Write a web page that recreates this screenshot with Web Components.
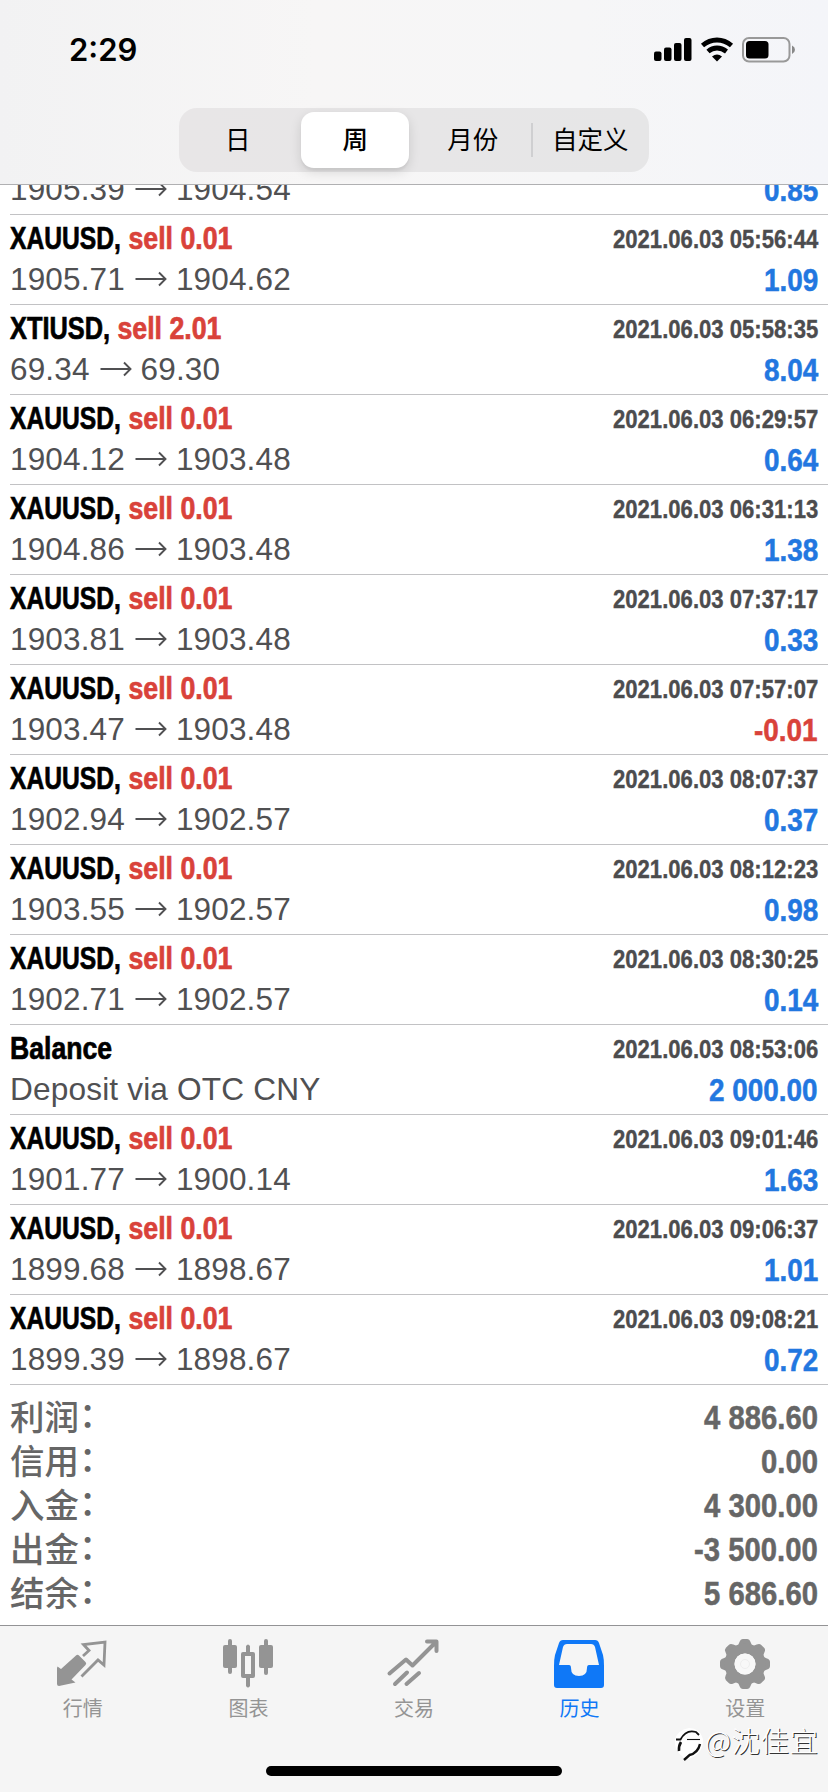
<!DOCTYPE html>
<html lang="zh-CN">
<head>
<meta charset="utf-8">
<title>历史</title>
<style>
html,body{margin:0;padding:0;background:#fff}
body{width:828px;height:1792px;overflow:hidden;font-family:"Liberation Sans","Noto Sans CJK SC",sans-serif}
</style>
</head>
<body>
<history-screen></history-screen>
<script>
function define(name, html, setup) {
  const tpl = document.createElement('template');
  tpl.innerHTML = html;
  customElements.define(name, class extends HTMLElement {
    connectedCallback() {
      if (this.shadowRoot) return;
      this.attachShadow({mode: 'open'}).append(tpl.content.cloneNode(true));
      if (setup) setup(this, this.shadowRoot);
    }
  });
}

/* Text squeezed horizontally by the factor in "k"; its box takes the squeezed width. */
define('narrow-text', `<style>
:host{display:inline-block;white-space:pre}
span{display:inline-block;transform-origin:0 50%}
</style><span><slot></slot></span>`, (host, root) => {
  const s = root.querySelector('span'), k = +host.getAttribute('k');
  const w = s.getBoundingClientRect().width;
  s.style.transform = `scaleX(${k})`;
  host.style.width = w * k + 'px';
});

define('status-bar', `<style>
:host{display:flex;height:108px;box-sizing:border-box;padding:30px 33px 0 69px;justify-content:space-between;align-items:flex-start}
time{font:600 31px/40px Inter,sans-serif}
svg{display:block}
</style><time>2:29</time>
<svg width="145" height="40" viewBox="0 0 145 40">
<g><rect x="4" y="21.500" width="7.500" height="9.500" rx="2"/><rect x="14" y="17.500" width="7.500" height="13.500" rx="2"/><rect x="24" y="13" width="7.500" height="18" rx="2"/><rect x="34" y="8" width="7.500" height="23" rx="2"/></g>
<g fill="none" stroke="#000" stroke-width="4.800"><path d="M52.500 15.500Q59 10 67 10T81.500 15.500"/><path d="M58 21.500Q62 18 67 18T76.500 21.500"/></g>
<path d="M62 26.500Q67 22.500 72 26.500L67 31.500Z"/>
<rect x="93" y="8" width="46.500" height="23.500" rx="6" fill="none" stroke="#999" stroke-width="2"/>
<rect x="96" y="11" width="22.500" height="17.500" rx="3.500"/><path d="M142 15.500Q145 17 145 19.700T142 24Z" fill="#888"/>
</svg>`);

define('segment-item', `<style>
:host{flex:1 1 0;display:flex;align-items:center;justify-content:center;position:relative;font:400 25.500px/36px "Noto Sans CJK SC",sans-serif;color:#000}
span{display:flex;align-items:center;justify-content:center;width:108px;height:56px;border-radius:13px;white-space:nowrap;box-sizing:border-box;padding-bottom:4px}
:host([active]) span{background:#fff;font-weight:500;box-shadow:0 4px 12px rgba(0,0,0,.13),0 3px 2px rgba(0,0,0,.04)}
:host([divided])::before{content:"";position:absolute;left:-.5px;top:15px;width:2px;height:34px;background:#cfcfd1}
</style><span><slot></slot></span>`);

define('segmented-control', `<style>
:host{display:flex;width:470px;height:64px;margin:0 auto;border-radius:18px;background:linear-gradient(90deg,#e8e6e7,#e6e6e7)}
</style><slot></slot>`);

define('app-header', `<style>
:host{display:block;flex:none;height:185px;box-sizing:border-box;border-bottom:1.500px solid #b0b0b2;background:linear-gradient(90deg,#f2f2f3 0,#f7f6f6 38%,#f6f6f7 70%,#f4f5f9)}
</style><status-bar></status-bar>
<segmented-control><segment-item>日</segment-item><segment-item active>周</segment-item><segment-item>月份</segment-item><segment-item divided>自定义</segment-item></segmented-control>`);

define('trade-row', `<style>
:host{display:block;height:90px;box-sizing:border-box;margin-left:10px;padding:3px 10px 0 0;border-bottom:1px solid #c2c2c4}
div{display:flex;height:40px;line-height:40px;justify-content:space-between;align-items:baseline;white-space:pre}
div+div{margin-top:1px}
.t{font-size:31.500px;font-weight:700;color:#000;-webkit-text-stroke:.7px}
.side{color:#d9423a}
.date{font-size:26px;font-weight:700;color:#4c4c4e;position:relative;top:-1px;-webkit-text-stroke:.4px}
.sub{font-size:31.500px;letter-spacing:.15px;color:#505052;display:flex;align-items:baseline}
.val{font-size:32px;font-weight:700;color:#2277e0;position:relative;top:1px;-webkit-text-stroke:.5px}
.neg{color:#d9423a}
.arrow{display:inline-block;width:51px;text-align:center;position:relative}
.arrow svg{display:block;width:51px;height:22px}
</style><div><span class="t"></span><span class="date"></span></div><div><span class="sub"></span><span class="val"></span></div>`, (host, root) => {
  const g = n => host.getAttribute(n), q = s => root.querySelector(s);
  const squeeze = (t, k, cls = '') => `<narrow-text class="${cls}" k="${k}">${t}</narrow-text>`;
  if (g('name')) q('.t').innerHTML = g('side') ? squeeze(g('name') + ',', g('name') === 'XTIUSD' ? .805 : .782) + squeeze(' ' + g('side'), .848, 'side') : squeeze(g('name'), .845);
  if (g('date')) q('.date').innerHTML = squeeze(g('date'), .85);
  q('.sub').innerHTML = g('to')
    ? `<span>${g('from')}</span><span class="arrow"><svg viewBox="0 0 51 22" fill="none" stroke="#505052" stroke-width="1.900"><path d="M10.500 11H40M34 4.500L40.500 11L34 17.500"/></svg></span><span>${g('to')}</span>`
    : squeeze(g('from'), 1.004);
  q('.val').innerHTML = squeeze(g('value'), .872);
  if (g('value')[0] === '-') q('.val').classList.add('neg');
});

define('total-row', `<style>
:host{display:flex;height:44px;line-height:44px;justify-content:space-between;align-items:baseline;padding:0 10px;color:#666;font-weight:700}
.l{font:500 34.500px/44px "Noto Sans CJK SC",sans-serif;position:relative;top:1px}
.c{position:relative;left:0;top:-3px}
.v{font-size:33px;-webkit-text-stroke:.5px}
</style><span class="l"><slot></slot><span class="c">：</span></span><span class="v"></span>`, (host, root) => {
  root.querySelector('.v').innerHTML = `<narrow-text k=".887">${host.getAttribute('value')}</narrow-text>`;
});

define('trade-list', `<style>
:host{display:flex;flex-direction:column;justify-content:flex-end;height:1200px;overflow:hidden}
::slotted(*){flex:none}
</style><slot></slot>`);

define('totals-list', `<style>
:host{display:block;height:240px;box-sizing:border-box;padding-top:7px}
</style><slot></slot>`);

define('tab-item', `<style>
:host{flex:1 1 0;display:flex;flex-direction:column;align-items:center;color:#949494}
:host([active]){color:#0f78f7}
::slotted(svg){display:block;width:52px;height:52px;overflow:visible;position:relative;left:-.5px}
span{font:400 20px/28px "Noto Sans CJK SC",sans-serif}
</style><slot></slot><span></span>`, (host, root) => { root.querySelector('span').textContent = host.getAttribute('label'); });

define('water-mark', `<style>
:host{position:absolute;left:676px;top:100px;display:flex;align-items:center;height:38px;color:#fff;font:300 28.500px/38px "Noto Sans CJK SC",sans-serif;text-shadow:1px 1px 0 #333}
svg{width:30px;height:36px;flex:none;overflow:visible}
span{position:relative;left:-1px;top:-5px;letter-spacing:.5px}
</style><svg viewBox="0 0 30 36"><path d="M-1 13Q1 3 13 1Q24 1 27 12Q28 25 15 31L9 33L6 29Q-2 23-1 13Z" fill="#fff"/><g fill="none" stroke="#111"><path d="M0 12.500H4.500Q10 2 20 5L23 8" stroke-width="1.800"/><path d="M5 15Q2.500 19 3 24" stroke-width="2.600"/><path d="M11 12.500H24" stroke-width="1.100"/><path d="M24 17Q22 26 13.500 28L8 33" stroke-width="2.400"/></g></svg><span>@沈佳宜</span>`);

define('tab-bar', `<style>
:host{display:block;flex:none;position:relative;height:167px;box-sizing:border-box;border-top:1.500px solid #939395;background:#f5f5f5}
nav{display:flex;box-sizing:border-box;padding-top:16px;height:140px}
.home{width:296px;height:10px;border-radius:5px;background:#000;margin:0 auto}
</style><nav>
<tab-item label="行情"><svg viewBox="0 0 52 52"><path d="M2 22.500L5.500 25L20.500 11.500Q22 10 23.500 11.500L30 18Q31.500 19.500 30 21L16 35.500L20 38.500L3.500 42Q1.500 42 1.500 40V24Z" fill="currentColor" transform="translate(-.5 2)"/><path d="M27 14L33 8.500L27.500 2.500L49 0L48 23L42 18L25.500 34.500" fill="none" stroke="currentColor" stroke-width="2.800"/></svg></tab-item>
<tab-item label="图表"><svg viewBox="0 0 52 52" fill="currentColor"><rect x="1" y="3" width="14" height="23" rx="2"/><rect x="6" y="-3" width="4" height="35" rx="2"/><rect x="37" y="3" width="14" height="23" rx="2"/><rect x="42" y="-3" width="4" height="36" rx="2"/><path d="M24 4q2-3 4 0v6h3q2 0 2 2v22q0 2-2 2h-3v8q-2 3-4 0v-8h-3q-2 0-2-2V12q0-2 2-2h3ZM23 14v18h6V14Z" fill-rule="evenodd"/></svg></tab-item>
<tab-item label="交易"><svg viewBox="0 0 52 52" fill="none" stroke="currentColor" stroke-width="4" stroke-linecap="round" stroke-linejoin="round"><path d="M2.500 31.500L19 17.500L25.500 23.500L49 0M40-.5H49.500V9M8 42L20 30.500M19.500 42L32 31"/></svg></tab-item>
<tab-item label="历史" active><svg viewBox="0 0 52 52" fill="currentColor"><path fill-rule="evenodd" d="M10-2H42Q45-2 46 1L50 13Q51 17 51 24V43Q51 46 48 46H4Q1 46 1 43V24Q1 17 2 13L6 1Q7-2 10-2ZM14 2Q11 2 10 5L6 23H16Q18 23 18 26Q18 34 26 34T34 26Q34 23 36 23H46L42 5Q41 2 38 2Z"/></svg></tab-item>
<tab-item label="设置"><svg class="gear" viewBox="0 0 52 52"></svg></tab-item>
</nav><div class="home"></div><water-mark></water-mark>`, (host, root) => {
  /* Eight rounded teeth around a ring. */
  let teeth = '';
  for (let i = 0; i < 8; i++) teeth += `<path d="M17 8L20.500 0Q21.500-3 24-3H28Q30.500-3 31.500 0L35 8Z" transform="rotate(${i * 45} 26 22)"/>`;
  root.querySelector('.gear').innerHTML = `<g fill="currentColor">${teeth}</g><circle cx="26" cy="22" r="15.500" fill="none" stroke="currentColor" stroke-width="10"/><circle cx="26" cy="22" r="10.500" fill="#f8f8f8"/><circle cx="26" cy="22" r="4.500" fill="none" stroke="#eee"/>`;
});

define('history-screen', `<style>
:host{display:flex;flex-direction:column;width:828px;height:1792px;background:#fff}
</style><app-header></app-header><trade-list></trade-list><totals-list>
<total-row value="4 886.60">利润</total-row><total-row value="0.00">信用</total-row><total-row value="4 300.00">入金</total-row><total-row value="-3 500.00">出金</total-row><total-row value="5 686.60">结余</total-row>
</totals-list><tab-bar></tab-bar>`, (host, root) => {
  const X = 'XAUUSD', S = 'sell 0.01';
  const rows = [
    ['','','','1905.39','1904.54','0.85'],
    [X,S,'05:56:44','1905.71','1904.62','1.09'],
    ['XTIUSD','sell 2.01','05:58:35','69.34','69.30','8.04'],
    [X,S,'06:29:57','1904.12','1903.48','0.64'],
    [X,S,'06:31:13','1904.86','1903.48','1.38'],
    [X,S,'07:37:17','1903.81','1903.48','0.33'],
    [X,S,'07:57:07','1903.47','1903.48','-0.01'],
    [X,S,'08:07:37','1902.94','1902.57','0.37'],
    [X,S,'08:12:23','1903.55','1902.57','0.98'],
    [X,S,'08:30:25','1902.71','1902.57','0.14'],
    ['Balance','','08:53:06','Deposit via OTC CNY','','2 000.00'],
    [X,S,'09:01:46','1901.77','1900.14','1.63'],
    [X,S,'09:06:37','1899.68','1898.67','1.01'],
    [X,S,'09:08:21','1899.39','1898.67','0.72']];
  const list = root.querySelector('trade-list');
  for (const [name, side, time, from, to, value] of rows) {
    const r = document.createElement('trade-row');
    const a = {name, side, date: time && '2021.06.03 ' + time, from, to, value};
    for (const k in a) r.setAttribute(k, a[k]);
    list.append(r);
  }
});
</script>
</body>
</html>
